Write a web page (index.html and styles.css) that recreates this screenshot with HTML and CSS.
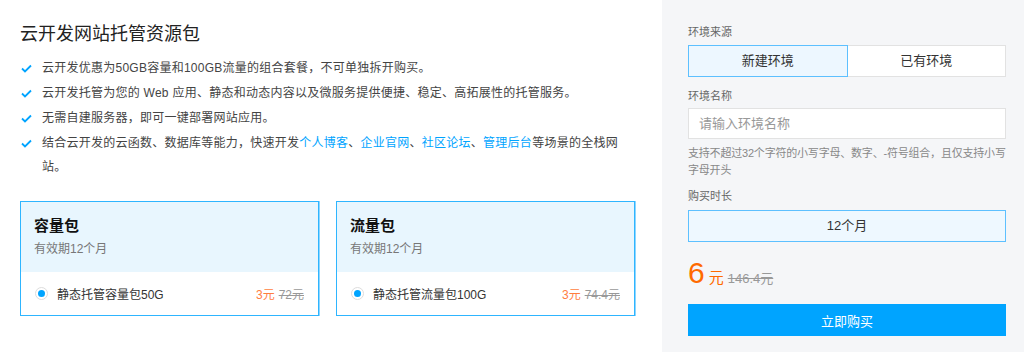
FILE: index.html
```html
<!DOCTYPE html>
<html lang="zh-CN">
<head>
    <meta charset="UTF-8">
    <title>云开发网站托管资源包</title>
    <link rel="stylesheet" href="styles.css">
</head>
<body>
    <div class="page">
        <div class="main">
            <h2 class="title">云开发网站托管资源包</h2>
            <ul class="features">
                <li><svg class="check" viewBox="0 0 11 9"><polyline points="1,4.5 4,7.5 10,1.5"/></svg><span>云开发优惠为50GB容量和100GB流量的组合套餐，不可单独拆开购买。</span></li>
                <li><svg class="check" viewBox="0 0 11 9"><polyline points="1,4.5 4,7.5 10,1.5"/></svg><span>云开发托管为您的 Web 应用、静态和动态内容以及微服务提供便捷、稳定、高拓展性的托管服务。</span></li>
                <li><svg class="check" viewBox="0 0 11 9"><polyline points="1,4.5 4,7.5 10,1.5"/></svg><span>无需自建服务器，即可一键部署网站应用。</span></li>
                <li><svg class="check" viewBox="0 0 11 9"><polyline points="1,4.5 4,7.5 10,1.5"/></svg><span>结合云开发的云函数、数据库等能力，快速开发<a href="#">个人博客</a>、<a href="#">企业官网</a>、<a href="#">社区论坛</a>、<a href="#">管理后台</a>等场景的全栈网站。</span></li>
            </ul>
            <div class="cards">
                <div class="card">
                    <div class="card-head">
                        <div class="card-title">容量包</div>
                        <div class="card-sub">有效期12个月</div>
                    </div>
                    <div class="card-body">
                        <span class="radio"></span>
                        <span class="item-name">静态托管容量包50G</span>
                        <span class="price">3元</span>
                        <span class="old">72元</span>
                    </div>
                </div>
                <div class="card">
                    <div class="card-head">
                        <div class="card-title">流量包</div>
                        <div class="card-sub">有效期12个月</div>
                    </div>
                    <div class="card-body">
                        <span class="radio"></span>
                        <span class="item-name">静态托管流量包100G</span>
                        <span class="price">3元</span>
                        <span class="old">74.4元</span>
                    </div>
                </div>
            </div>
        </div>

        <div class="side">
            <div class="label">环境来源</div>
            <div class="segment">
                <div class="seg active">新建环境</div>
                <div class="seg">已有环境</div>
            </div>

            <div class="label gap">环境名称</div>
            <input class="field" type="text" placeholder="请输入环境名称">
            <div class="hint">支持不超过32个字符的小写字母、数字、-符号组合，且仅支持小写字母开头</div>

            <div class="label gap2">购买时长</div>
            <div class="duration">12个月</div>

            <div class="total">
                <span class="num">6</span>
                <span class="unit">元</span>
                <span class="total-old">146.4元</span>
            </div>

            <button class="buy">立即购买</button>
        </div>
    </div>
</body>
</html>
```

FILE: styles.css
```css
body {
    margin: 0;
    font-family: "Liberation Sans", "Noto Sans CJK SC", sans-serif;
    color: #333;
    background: #fff;
}
.page {
    display: flex;
    height: 352px;
}
.main {
    width: 662px;
    box-sizing: border-box;
    padding: 22px 27px 0 20px;
}
.title {
    margin: 0;
    font-size: 18px;
    font-weight: normal;
    line-height: 24px;
    color: #222;
}
.features {
    list-style: none;
    margin: 10px 0 0;
    padding: 0;
    font-size: 12px;
    line-height: 24px;
    letter-spacing: 0.25px;
    color: #444;
}
.features li {
    display: flex;
    margin-bottom: 1px;
}
.features li span {
    flex: 1;
}
.features a {
    color: #00a4ff;
    text-decoration: none;
}
.check {
    width: 11px;
    height: 9px;
    margin: 8px 10px 0 1px;
    flex: none;
}
.check polyline {
    fill: none;
    stroke: #00a4ff;
    stroke-width: 1.8;
}
.cards {
    display: grid;
    grid-template-columns: 1fr 1fr;
    gap: 17px;
    margin-top: 22px;
}
.card {
    border: 1px solid #2eb5ff;
    box-shadow: 1px 0 0 #8fd6ff;
}
.card-head {
    background: #e8f6fe;
    padding: 13px 13px 14px;
}
.card-title {
    font-size: 15px;
    font-weight: bold;
    line-height: 22px;
    color: #111;
}
.card-sub {
    margin-top: 3px;
    font-size: 12px;
    line-height: 18px;
    color: #777;
}
.card-body {
    display: flex;
    align-items: center;
    height: 43px;
    padding: 0 14px 0 14px;
    font-size: 12px;
}
.radio {
    width: 11px;
    height: 11px;
    border: 1px solid #ddd;
    border-radius: 50%;
    margin-right: 9px;
    position: relative;
    background: #fff;
}
.radio::after {
    content: "";
    position: absolute;
    left: 2px;
    top: 2px;
    width: 7px;
    height: 7px;
    border-radius: 50%;
    background: #00a4ff;
}
.item-name {
    flex: 1;
    color: #333;
}
.price {
    color: #ff7e3f;
}
.old {
    margin-left: 4px;
    color: #999;
    text-decoration: line-through;
}
.side {
    flex: 1;
    background: #f5f6f8;
    padding: 23px 18px 0 26px;
}
.label {
    font-size: 11px;
    line-height: 18px;
    color: #666;
}
.label.gap {
    margin-top: 10px;
}
.label.gap2 {
    margin-top: 8px;
}
.segment {
    display: flex;
    margin-top: 4px;
}
.seg {
    flex: 1;
    height: 30px;
    line-height: 30px;
    text-align: center;
    font-size: 13px;
    color: #333;
    background: #fff;
    border: 1px solid #e2e2e2;
}
.seg + .seg {
    border-left: none;
}
.seg.active {
    background: #edf7ff;
    border-color: #5dc0ff;
}
.field {
    display: block;
    box-sizing: border-box;
    width: 100%;
    height: 31px;
    margin-top: 3px;
    padding: 0 10px;
    border: 1px solid #e2e2e2;
    background: #fff;
    font-family: inherit;
    font-size: 13px;
    outline: none;
}
.field::placeholder {
    color: #999;
}
.hint {
    margin-top: 6px;
    font-size: 11px;
    line-height: 17px;
    letter-spacing: -0.2px;
    color: #888;
}
.duration {
    margin-top: 5px;
    height: 30px;
    line-height: 30px;
    text-align: center;
    font-size: 13px;
    color: #333;
    background: #eef8ff;
    border: 1px solid #5dc0ff;
}
.total {
    margin-top: 12px;
    height: 38px;
    display: flex;
    align-items: baseline;
    line-height: 38px;
}
.num {
    font-size: 30px;
    color: #ff6a00;
}
.unit {
    margin-left: 4px;
    font-size: 15px;
    color: #ff6a00;
}
.total-old {
    margin-left: 4px;
    font-size: 13px;
    color: #999;
    text-decoration: line-through;
}
.buy {
    display: block;
    width: 100%;
    height: 32px;
    margin-top: 12px;
    border: none;
    background: #00a4ff;
    color: #fff;
    font-family: inherit;
    font-size: 13px;
    cursor: pointer;
}
```
